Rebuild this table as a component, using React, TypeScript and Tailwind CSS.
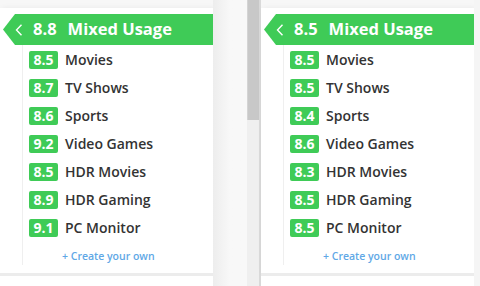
const panels = [
  {
    total: "8.8",
    scores: ["8.5", "8.7", "8.6", "9.2", "8.5", "8.9", "9.1"],
  },
  {
    total: "8.5",
    scores: ["8.5", "8.5", "8.4", "8.6", "8.3", "8.5", "8.5"],
  },
];

const labels = ["Movies", "TV Shows", "Sports", "Video Games", "HDR Movies", "HDR Gaming", "PC Monitor"];

function ScoreCard({ total, scores }: { total: string; scores: string[] }) {
  return (
    <div className="w-[213px] shrink-0 flex flex-col">
      <div className="h-2 bg-[#f7f7f7]" />
      <div className="bg-white h-[265px] pt-[6px] shadow-[2px_0_6px_rgba(0,0,0,0.06)]">
        <div className="ml-[3px] h-[31px] bg-[#3fcb57] flex items-center [clip-path:polygon(12px_0,100%_0,100%_100%,12px_100%,0_50%)]">
          <svg width="8" height="12" viewBox="0 0 8 12" className="ml-[12px] shrink-0">
            <path d="M6.5 0.8 L1.5 6 L6.5 11.2" fill="none" stroke="white" strokeWidth="1.4" />
          </svg>
          <span className="ml-[10px] text-[16.5px] font-bold text-white">{total}</span>
          <span className="ml-[11px] text-[16.5px] font-bold text-white">Mixed Usage</span>
        </div>
        <div className="ml-[22px] border-l border-[#efefef] pl-[6px] pt-[6px] h-[220px]">
          {labels.map((label, i) => (
            <div key={label} className="h-[28px] flex items-start">
              <span className="w-[29px] h-[18px] rounded-[2px] bg-[#3fcb57] text-white text-[14px] font-bold leading-[18px] text-center">
                {scores[i]}
              </span>
              <span className="ml-[7px] text-[14px] font-semibold text-[#333] leading-[18px]">{label}</span>
            </div>
          ))}
          <div className="ml-[33px] text-[10.5px] font-semibold text-[#5fa8e6] leading-[18px]">+ Create your own</div>
        </div>
      </div>
      <div className="h-[3px] bg-[#ececec]" />
      <div className="flex-1 bg-white" />
    </div>
  );
}

export default function App() {
  return (
    <div className="w-[480px] h-[286px] overflow-hidden flex bg-[#f5f5f5] font-['Open_Sans',sans-serif]">
      <ScoreCard {...panels[0]} />
      <div className="w-[34px] shrink-0 bg-gradient-to-r from-[#ededed] via-[#f8f8f8] to-[#f8f8f8]" />
      <div className="w-[12px] shrink-0 flex flex-col bg-[#efefef]">
        <div className="h-[120px] bg-[#c8c8c8] border-l border-[#d4d4d4]" />
      </div>
      <div className="w-[2px] shrink-0 bg-[#d9d9d9]" />
      <ScoreCard {...panels[1]} />
      <div className="flex-1 bg-[#f5f5f5]" />
    </div>
  );
}
